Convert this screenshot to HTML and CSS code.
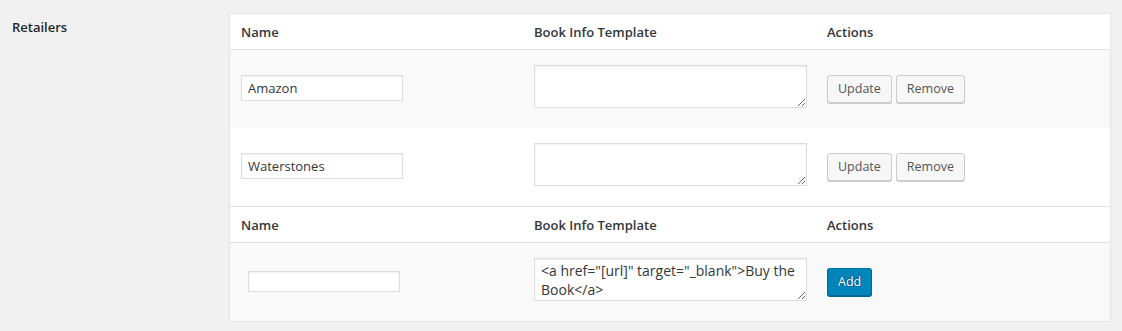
FILE: index.html
```html
<!DOCTYPE html>
<html lang="en">
  <head>
    <meta charset="UTF-8" />
    <title>Retailers</title>
    <link rel="stylesheet" href="styles.css">
  </head>
  <body>
    <div class="setting">
      <div class="setting-label">Retailers</div>

      <table class="retailers">
        <colgroup>
          <col class="col-name" />
          <col class="col-template" />
          <col class="col-actions" />
        </colgroup>
        <thead>
          <tr class="head-row">
            <th>Name</th>
            <th>Book Info Template</th>
            <th>Actions</th>
          </tr>
        </thead>
        <tbody>
          <tr class="row-alt">
            <td><input type="text" class="name-input" value="Amazon" /></td>
            <td><textarea class="template-input"></textarea></td>
            <td>
              <div class="actions">
                <button class="button">Update</button>
                <button class="button">Remove</button>
              </div>
            </td>
          </tr>
          <tr>
            <td><input type="text" class="name-input" value="Waterstones" /></td>
            <td><textarea class="template-input"></textarea></td>
            <td>
              <div class="actions">
                <button class="button">Update</button>
                <button class="button">Remove</button>
              </div>
            </td>
          </tr>
        </tbody>
        <tbody class="new-retailer">
          <tr class="head-row head-row-split">
            <th>Name</th>
            <th>Book Info Template</th>
            <th>Actions</th>
          </tr>
          <tr class="row-alt">
            <td><input type="text" class="new-name-input" /></td>
            <td><textarea class="template-input"><a href="[url]" target="_blank">Buy the Book</a></textarea></td>
            <td>
              <div class="actions">
                <button class="button button-primary">Add</button>
              </div>
            </td>
          </tr>
        </tbody>
      </table>
    </div>
  </body>
</html>
```

FILE: styles.css
```css
body {
  margin: 0;
  background: #f1f1f1;
  font-family: "Open Sans", "Noto Sans", sans-serif;
  color: #23282d;
}

.setting {
  display: flex;
  align-items: flex-start;
  padding-top: 13px;
}

.setting-label {
  width: 217px;
  padding-left: 12px;
  margin-top: 4px;
  font-size: 13px;
  font-weight: 600;
  line-height: 21px;
}

.retailers {
  width: 882px;
  table-layout: fixed;
  border-collapse: separate;
  border-spacing: 0;
  border: 1px solid #e5e5e5;
  background: #fff;
  box-shadow: 0 1px 1px rgba(0, 0, 0, 0.04);
}

.col-name {
  width: 294px;
}

.col-template,
.col-actions {
  width: 293px;
}

.retailers th {
  height: 35px;
  padding: 0 10px;
  text-align: left;
  font-size: 13px;
  font-weight: 600;
  color: #32373c;
  border-bottom: 1px solid #e1e1e1;
}

.head-row-split th {
  border-top: 1px solid #e1e1e1;
}

.retailers td {
  height: 78px;
  padding: 0 10px;
  vertical-align: top;
}

.retailers th:first-child,
.retailers td:first-child {
  padding-left: 11px;
}

.row-alt td {
  background: #f9f9f9;
}

.name-input,
.new-name-input,
.template-input {
  display: block;
  box-sizing: border-box;
  margin: 0;
  border: 1px solid #ddd;
  box-shadow: inset 0 1px 2px rgba(0, 0, 0, 0.07);
  background: #fff;
  color: #32373c;
  font-family: inherit;
  outline: none;
}

.name-input {
  width: 162px;
  height: 26px;
  margin-top: 25px;
  padding: 0 6px;
  font-size: 13px;
}

.new-name-input {
  width: 152px;
  height: 21px;
  margin-top: 28px;
  margin-left: 7px;
  padding: 0 4px;
  font-size: 13px;
}

.template-input {
  width: 273px;
  height: 43px;
  margin-top: 15px;
  padding: 2px 6px;
  font-size: 14px;
  line-height: 19px;
  resize: vertical;
}

.actions {
  display: flex;
  gap: 4px;
  margin-top: 25px;
}

.button {
  height: 28px;
  margin: 0;
  padding: 0 10px 1px;
  font-family: inherit;
  font-size: 12.5px;
  line-height: 26px;
  color: #555;
  background: #f7f7f7;
  border: 1px solid #ccc;
  border-radius: 3px;
  box-shadow: 0 1px 0 #ccc;
  cursor: pointer;
}

.button-primary {
  color: #fff;
  background: #0085ba;
  border-color: #0073aa #006799 #006799;
  box-shadow: 0 1px 0 #006799;
  text-shadow: 0 -1px 1px #006799, 1px 0 1px #006799, 0 1px 1px #006799, -1px 0 1px #006799;
}
```
